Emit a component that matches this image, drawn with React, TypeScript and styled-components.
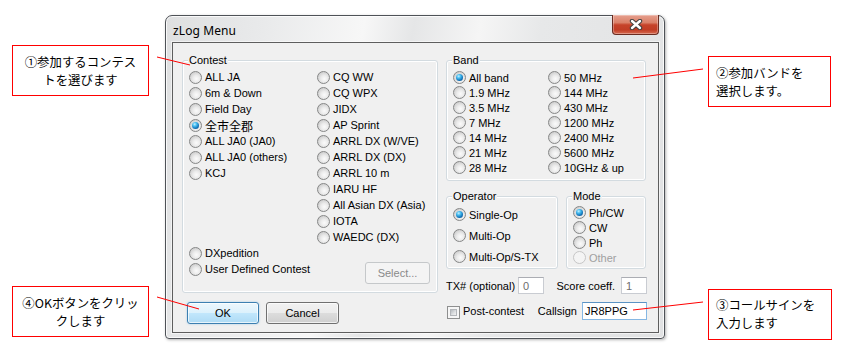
import React from "react";
import styled, { createGlobalStyle, css } from "styled-components";

const GlobalStyle = createGlobalStyle`
  html, body { margin: 0; padding: 0; background: #ffffff; }
  body { font-family: "Liberation Sans", Arial, "Noto Sans CJK JP", sans-serif; font-size: 11px; color: #000; }
  * { box-sizing: border-box; }
`;

const Page = styled.div`
  position: relative;
  width: 845px;
  height: 352px;
  overflow: hidden;
  padding: 15px 0 0 165px;
`;

/* ---------- window frame ---------- */

const Window = styled.div`
  width: 500px;
  height: 324px;
  border: 1px solid #4e5257;
  border-radius: 7px 7px 4px 4px;
  padding: 0 5px 5px 6px;
  display: flex;
  flex-direction: column;
  background: linear-gradient(
    100deg,
    #dedfe0 0%,
    #e9eaeb 18%,
    #f7f7f7 36%,
    #e5e6e7 45%,
    #f5f5f5 57%,
    #e7e8e9 68%,
    #e1e2e3 100%
  );
  box-shadow: inset 0 0 0 1px rgba(255, 255, 255, 0.8), 1px 1px 3px rgba(0, 0, 0, 0.3);
`;

const TitleBar = styled.div`
  height: 26px;
  display: flex;
  align-items: center;
  padding: 2px 0 0 1px;
`;

const Title = styled.span`
  font-family: "Noto Sans", "Open Sans", sans-serif;
  font-size: 12px;
  color: #000;
  letter-spacing: 0.1px;
`;

const CloseButton = styled.div`
  margin-left: auto;
  align-self: flex-start;
  margin-top: -3px;
  width: 47px;
  height: 20px;
  border: 1px solid #6a2b20;
  border-top: none;
  border-radius: 0 0 4px 4px;
  display: flex;
  align-items: center;
  justify-content: center;
  background: linear-gradient(
    to bottom,
    #e6a08f 0%,
    #da8068 40%,
    #c6432a 52%,
    #c13d25 78%,
    #d66a50 100%
  );
  box-shadow: inset 0 0 0 1px rgba(255, 255, 255, 0.3);
`;

const Client = styled.div`
  width: 487px;
  height: 291px;
  border: 1px solid #5e5e5e;
  background: #f0f0f0;
  padding: 17px 0 0 9px;
  display: flex;
  gap: 8px;
  box-shadow: 0 0 0 1px rgba(255, 255, 255, 0.55);
`;

const LeftColumn = styled.div`
  width: 256px;
  display: flex;
  flex-direction: column;
`;

const RightColumn = styled.div`
  width: 201px;
  display: flex;
  flex-direction: column;
`;

/* ---------- group boxes ---------- */

const GroupBox = styled.div<{ $w: number; $h: number; $pt: number }>`
  position: relative;
  flex: none;
  width: ${(p) => p.$w}px;
  height: ${(p) => p.$h}px;
  border: 1px solid #d3dbe0;
  border-radius: 3px;
  box-shadow: inset 0 0 0 1px #ffffff;
  padding: ${(p) => p.$pt}px 0 0 6px;
`;

const GroupLabel = styled.span`
  position: absolute;
  top: -7px;
  left: 5px;
  padding: 0 1px;
  line-height: 13px;
  background: #f0f0f0;
  white-space: nowrap;
`;

const Columns = styled.div<{ $first: number }>`
  display: grid;
  grid-template-columns: ${(p) => p.$first}px 1fr;
  height: 100%;
`;

const Column = styled.div`
  display: flex;
  flex-direction: column;
`;

const Spacer = styled.div<{ $h: number }>`
  height: ${(p) => p.$h}px;
  flex: none;
`;

const OpModeRow = styled.div`
  margin-top: 15px;
  display: flex;
  gap: 8px;
`;

/* ---------- radio ---------- */

const RadioItem = styled.div<{ $h: number; $disabled?: boolean }>`
  display: flex;
  align-items: center;
  gap: 3px;
  height: ${(p) => p.$h}px;
  flex: none;
  white-space: nowrap;
  color: ${(p) => (p.$disabled ? "#a0a0a0" : "#000")};
`;

const RadioDot = styled.span<{ $checked?: boolean; $disabled?: boolean }>`
  position: relative;
  flex: none;
  width: 13px;
  height: 13px;
  border-radius: 50%;
  border: 1px solid ${(p) => (p.$disabled ? "#c6c6c6" : "#868787")};
  background: ${(p) =>
    p.$disabled
      ? "#f4f4f4"
      : "radial-gradient(circle at 58% 62%, #fbfbfb 0%, #ececec 35%, #cfcfcf 75%, #bdbdbd 100%)"};
  ${(p) =>
    p.$checked &&
    css`
      &::after {
        content: "";
        position: absolute;
        left: 2px;
        top: 2px;
        width: 7px;
        height: 7px;
        border-radius: 50%;
        background: radial-gradient(
          circle at 38% 32%,
          #c4f0ff 0%,
          #47bdf0 30%,
          #1273b8 65%,
          #0b3f77 100%
        );
      }
    `}
`;

const CjkText = styled.span`
  font-family: "Noto Sans CJK JP", sans-serif;
  font-size: 12px;
`;

type RadioProps = { label: React.ReactNode; h: number; checked?: boolean; disabled?: boolean };

const Radio = ({ label, h, checked, disabled }: RadioProps) => (
  <RadioItem $h={h} $disabled={disabled}>
    <RadioDot $checked={checked} $disabled={disabled} />
    <span>{label}</span>
  </RadioItem>
);

/* ---------- buttons / inputs ---------- */

const Button = styled.div<{ $w: number; $variant: "default" | "normal" | "disabled" }>`
  width: ${(p) => p.$w}px;
  height: 22px;
  flex: none;
  border-radius: 3px;
  display: flex;
  align-items: center;
  justify-content: center;
  ${(p) =>
    p.$variant === "default"
      ? css`
          border: 1px solid #3c7fb1;
          background: linear-gradient(to bottom, #ecf7fd 0%, #dcf1fc 50%, #c2e7fc 50%, #aedbf5 100%);
          box-shadow: inset 0 0 0 1px rgba(255, 255, 255, 0.7), 0 0 2px rgba(70, 160, 220, 0.5);
          color: #000;
        `
      : p.$variant === "normal"
      ? css`
          border: 1px solid #707070;
          background: linear-gradient(to bottom, #f2f2f2 0%, #ebebeb 50%, #dddddd 50%, #cfcfcf 100%);
          box-shadow: inset 0 0 0 1px rgba(255, 255, 255, 0.7);
          color: #000;
        `
      : css`
          border: 1px solid #c5c8ca;
          background: #f4f4f4;
          color: #8a8a8a;
        `}
`;

const ButtonRow = styled.div`
  margin-top: 9px;
  padding-left: 5px;
  display: flex;
  gap: 7px;
`;

const SelectButton = styled(Button)`
  margin-top: 17px;
  margin-right: 7px;
  align-self: flex-end;
`;

const FieldRow = styled.div<{ $h: number }>`
  margin-top: 8px;
  height: ${(p) => p.$h}px;
  display: flex;
  align-items: center;
  white-space: nowrap;
`;

const FieldLabel = styled.span<{ $push?: boolean; $mr: number; $ml?: number }>`
  margin-left: ${(p) => (p.$push ? "auto" : `${p.$ml ?? 0}px`)};
  margin-right: ${(p) => p.$mr}px;
`;

const TextBox = styled.div<{ $w: number; $h: number; $focus?: boolean; $dim?: boolean }>`
  width: ${(p) => p.$w}px;
  height: ${(p) => p.$h}px;
  flex: none;
  background: #ffffff;
  display: flex;
  align-items: center;
  padding-left: ${(p) => (p.$focus ? 2 : 4)}px;
  color: ${(p) => (p.$dim ? "#6d6d6d" : "#000")};
  border: 1px solid ${(p) => (p.$focus ? "#86b7e3" : "#c9ccd2")};
  border-top-color: ${(p) => (p.$focus ? "#5b93c4" : "#abadb3")};
`;

const CheckBox = styled.span`
  position: relative;
  flex: none;
  width: 13px;
  height: 13px;
  margin: 3px 0 0 1px;
  border: 1px solid #8e8f8f;
  background: #f6f6f6;
  &::after {
    content: "";
    position: absolute;
    inset: 2px;
    background: linear-gradient(135deg, #b6babf 0%, #dfe1e3 60%, #f2f2f2 100%);
    border: 1px solid #b3b6ba;
  }
`;

/* ---------- annotations ---------- */

const Callout = styled.div<{ $x: number; $y: number; $w: number; $h: number; $center?: boolean; $pt?: number }>`
  position: absolute;
  left: ${(p) => p.$x}px;
  top: ${(p) => p.$y}px;
  width: ${(p) => p.$w}px;
  height: ${(p) => p.$h}px;
  border: 1px solid #ff0000;
  background: #ffffff;
  font-family: "Noto Sans CJK JP", sans-serif;
  font-size: 12.4px;
  line-height: 18px;
  color: #000;
  white-space: nowrap;
  display: flex;
  flex-direction: column;
  ${(p) =>
    p.$center
      ? css`
          align-items: center;
          justify-content: center;
          text-align: center;
        `
      : css`
          padding: ${p.$pt ?? 6}px 0 0 7px;
        `}
`;

const Leaders = styled.svg`
  position: absolute;
  left: 0;
  top: 0;
  pointer-events: none;
`;

const CloseIcon = () => (
  <svg width="14" height="11" viewBox="0 0 14 11">
    <path d="M3 2 L11 9 M11 2 L3 9" stroke="#3f3f3f" strokeWidth="4.4" strokeLinecap="round" fill="none" />
    <path d="M3 2 L11 9 M11 2 L3 9" stroke="#ffffff" strokeWidth="2.4" strokeLinecap="round" fill="none" />
  </svg>
);

export default function App() {
  const contestCol1a = ["ALL JA", "6m & Down", "Field Day"];
  const contestCol2 = [
    "CQ WW",
    "CQ WPX",
    "JIDX",
    "AP Sprint",
    "ARRL DX (W/VE)",
    "ARRL DX (DX)",
    "ARRL 10 m",
    "IARU HF",
    "All Asian DX (Asia)",
    "IOTA",
    "WAEDC (DX)",
  ];
  const bandCol1 = ["All band", "1.9 MHz", "3.5 MHz", "7 MHz", "14 MHz", "21 MHz", "28 MHz"];
  const bandCol2 = ["50 MHz", "144 MHz", "430 MHz", "1200 MHz", "2400 MHz", "5600 MHz", "10GHz & up"];

  return (
    <>
      <GlobalStyle />
      <Page>
        <Window>
          <TitleBar>
            <Title>zLog Menu</Title>
            <CloseButton>
              <CloseIcon />
            </CloseButton>
          </TitleBar>
          <Client>
            <LeftColumn>
              <GroupBox $w={256} $h={233} $pt={8}>
                <GroupLabel>Contest</GroupLabel>
                <Columns $first={128}>
                  <Column>
                    {contestCol1a.map((t) => (
                      <Radio key={t} label={t} h={16} />
                    ))}
                    <Radio label={<CjkText>全市全郡</CjkText>} h={16} checked />
                    <Radio label="ALL JA0 (JA0)" h={16} />
                    <Radio label="ALL JA0 (others)" h={16} />
                    <Radio label="KCJ" h={16} />
                    <Spacer $h={64} />
                    <Radio label="DXpedition" h={16} />
                    <Radio label="User Defined Contest" h={16} />
                  </Column>
                  <Column>
                    {contestCol2.map((t) => (
                      <Radio key={t} label={t} h={16} />
                    ))}
                    <SelectButton $w={65} $variant="disabled">
                      Select...
                    </SelectButton>
                  </Column>
                </Columns>
              </GroupBox>
              <ButtonRow>
                <Button $w={72} $variant="default">
                  OK
                </Button>
                <Button $w={73} $variant="normal">
                  Cancel
                </Button>
              </ButtonRow>
            </LeftColumn>
            <RightColumn>
              <GroupBox $w={200} $h={121} $pt={9}>
                <GroupLabel>Band</GroupLabel>
                <Columns $first={95}>
                  <Column>
                    {bandCol1.map((t, i) => (
                      <Radio key={t} label={t} h={15} checked={i === 0} />
                    ))}
                  </Column>
                  <Column>
                    {bandCol2.map((t) => (
                      <Radio key={t} label={t} h={15} />
                    ))}
                  </Column>
                </Columns>
              </GroupBox>
              <OpModeRow>
                <GroupBox $w={112} $h={73} $pt={7}>
                  <GroupLabel>Operator</GroupLabel>
                  <Column>
                    <Radio label="Single-Op" h={21} checked />
                    <Radio label="Multi-Op" h={21} />
                    <Radio label="Multi-Op/S-TX" h={21} />
                  </Column>
                </GroupBox>
                <GroupBox $w={80} $h={73} $pt={8}>
                  <GroupLabel>Mode</GroupLabel>
                  <Column>
                    <Radio label="Ph/CW" h={15} checked />
                    <Radio label="CW" h={15} />
                    <Radio label="Ph" h={15} />
                    <Radio label="Other" h={15} disabled />
                  </Column>
                </GroupBox>
              </OpModeRow>
              <FieldRow $h={17}>
                <FieldLabel $mr={3}>TX# (optional)</FieldLabel>
                <TextBox $w={26} $h={17} $dim>
                  0
                </TextBox>
                <FieldLabel $push $mr={6}>
                  Score coeff.
                </FieldLabel>
                <TextBox $w={26} $h={17} $dim>
                  1
                </TextBox>
              </FieldRow>
              <FieldRow $h={18}>
                <CheckBox />
                <FieldLabel $ml={3} $mr={0}>
                  Post-contest
                </FieldLabel>
                <FieldLabel $push $mr={5}>
                  Callsign
                </FieldLabel>
                <TextBox $w={65} $h={18} $focus>
                  JR8PPG
                </TextBox>
              </FieldRow>
            </RightColumn>
          </Client>
        </Window>

        <Leaders width="845" height="352" viewBox="0 0 845 352">
          <g stroke="#ff0000" strokeWidth="1" fill="none">
            <line x1="157" y1="57" x2="190" y2="65" />
            <line x1="703" y1="69" x2="633" y2="78" />
            <line x1="703" y1="302" x2="633" y2="310" />
            <line x1="157" y1="297" x2="199" y2="309" />
          </g>
        </Leaders>

        <Callout $x={12} $y={45} $w={137} $h={51} $center>
          <span>①参加するコンテス</span>
          <span>トを選びます</span>
        </Callout>
        <Callout $x={708} $y={56} $w={123} $h={51} $pt={7}>
          <span>②参加バンドを</span>
          <span>選択します。</span>
        </Callout>
        <Callout $x={708} $y={289} $w={124} $h={51} $pt={6}>
          <span>③コールサインを</span>
          <span>入力します</span>
        </Callout>
        <Callout $x={12} $y={286} $w={137} $h={51} $center>
          <span>④OKボタンをクリッ</span>
          <span>クします</span>
        </Callout>
      </Page>
    </>
  );
}
